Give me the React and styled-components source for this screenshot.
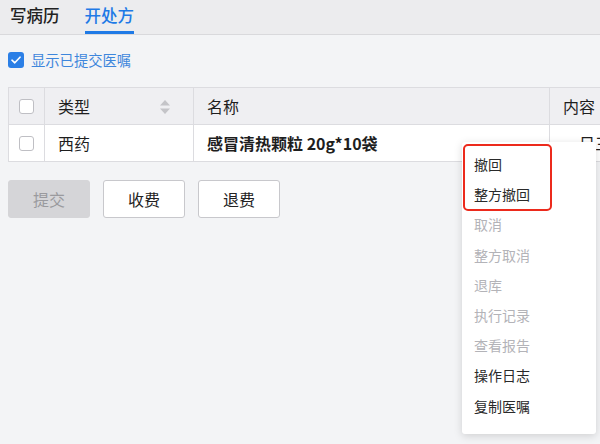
import React from "react";
import styled, { createGlobalStyle } from "styled-components";

const Global = createGlobalStyle`
  html, body { margin: 0; padding: 0; }
  body {
    width: 600px; height: 444px; overflow: hidden;
    background: #f3f4f6;
    font-family: "Noto Sans CJK SC", "Noto Sans", sans-serif;
    color: #222;
  }
`;

const Page = styled.div`
  position: relative;
  width: 600px;
  height: 444px;
  overflow: hidden;
`;

const TabBar = styled.div`
  display: flex;
  gap: 25px;
  padding-left: 10px;
  height: 34px;
  background: #ececee;
  border-bottom: 1px solid #d9d9dc;
`;

const Tab = styled.div`
  font-size: 16.5px;
  font-weight: 500;
  line-height: 31px;
  height: 31px;
  color: ${p => (p.$active ? "#1f7ae6" : "#222")};
  border-bottom: 3px solid ${p => (p.$active ? "#1f7ae6" : "transparent")};
`;

const Content = styled.div`
  padding: 16px 0 0 8px;
`;

const CheckRow = styled.label`
  display: flex;
  align-items: center;
  gap: 7px;
  height: 17px;
  font-size: 14.3px;
  color: #3d86dc;
`;

const Box = styled.span`
  display: inline-flex;
  align-items: center;
  justify-content: center;
  width: ${p => (p.$checked ? 16 : 15)}px;
  height: ${p => (p.$checked ? 16 : 15)}px;
  border-radius: 3px;
  box-sizing: border-box;
  background: ${p => (p.$checked ? "#2b7fe6" : "#fff")};
  border: ${p => (p.$checked ? "none" : "1px solid #bfbfc4")};
  flex: none;
`;

const TableWrap = styled.div`
  margin-top: 19px;
  overflow: hidden;
`;

const Table = styled.div`
  width: 680px;
  border: 1px solid #dcdce0;
  border-right: none;
  background: #fff;
`;

const Row = styled.div`
  display: grid;
  grid-template-columns: 35px 149px 356px 1fr;
  height: 36px;
  background: ${p => (p.$head ? "#efeff2" : "#fff")};
  border-bottom: ${p => (p.$head ? "1px solid #dcdce0" : "none")};
`;

const Cell = styled.div`
  display: flex;
  align-items: center;
  padding-left: ${p => (p.$center ? 0 : 13)}px;
  justify-content: ${p => (p.$center ? "center" : "flex-start")};
  border-left: ${p => (p.$first ? "none" : "1px solid #dcdce0")};
  font-size: 16px;
  font-weight: ${p => (p.$bold ? 600 : 400)};
  color: #1e1e1e;
  position: relative;
  white-space: nowrap;
  overflow: hidden;
`;

const Sort = styled.svg`
  position: absolute;
  right: 22px;
  top: 11px;
`;

const Buttons = styled.div`
  display: flex;
  gap: 13px;
  margin-top: 18px;
`;

const Button = styled.div`
  width: 82px;
  height: 38px;
  box-sizing: border-box;
  display: flex;
  align-items: center;
  justify-content: center;
  border-radius: 3px;
  font-size: 16px;
  background: ${p => (p.$disabled ? "#d5d5d8" : "#fff")};
  color: ${p => (p.$disabled ? "#9a9a9e" : "#222")};
  border: 1px solid ${p => (p.$disabled ? "#d5d5d8" : "#c8c8cc")};
`;

const Menu = styled.div`
  position: absolute;
  left: 462px;
  top: 142px;
  width: 134px;
  padding: 7px 0 13px;
  background: #fff;
  border-radius: 3px;
  box-shadow: 0 2px 8px rgba(0, 0, 0, 0.15);
`;

const Item = styled.div`
  height: 30.2px;
  line-height: 30px;
  padding-left: 12px;
  font-size: 14px;
  color: ${p => (p.$disabled ? "#b3b3b8" : "#2a2a2a")};
`;

const Highlight = styled.div`
  position: absolute;
  left: 1px;
  top: 2px;
  width: 89px;
  height: 67px;
  box-sizing: border-box;
  border: 2.5px solid #ec2a1c;
  border-radius: 5px;
`;

const Check = () => (
  <svg width="10" height="8" viewBox="0 0 10 8">
    <path d="M1 4.2 L3.8 6.8 L9 1.2" fill="none" stroke="#fff" strokeWidth="1.6" strokeLinecap="round" strokeLinejoin="round" />
  </svg>
);

const items = [
  ["撤回", false],
  ["整方撤回", false],
  ["取消", true],
  ["整方取消", true],
  ["退库", true],
  ["执行记录", true],
  ["查看报告", true],
  ["操作日志", false],
  ["复制医嘱", false],
];

export default function App() {
  return (
    <Page>
      <Global />
      <TabBar>
        <Tab>写病历</Tab>
        <Tab $active>开处方</Tab>
      </TabBar>
      <Content>
        <CheckRow>
          <Box $checked><Check /></Box>
          显示已提交医嘱
        </CheckRow>
        <TableWrap>
          <Table>
            <Row $head>
              <Cell $first $center><Box /></Cell>
              <Cell>
                类型
                <Sort width="12" height="16" viewBox="0 0 12 16">
                  <path d="M6 1 L11 6.5 L1 6.5 Z" fill="#c4c4c8" />
                  <path d="M6 15 L11 9.5 L1 9.5 Z" fill="#c4c4c8" />
                </Sort>
              </Cell>
              <Cell>名称</Cell>
              <Cell>内容</Cell>
            </Row>
            <Row>
              <Cell $first $center><Box /></Cell>
              <Cell>西药</Cell>
              <Cell $bold>感冒清热颗粒 20g*10袋</Cell>
              <Cell>一日三次</Cell>
            </Row>
          </Table>
        </TableWrap>
        <Buttons>
          <Button $disabled>提交</Button>
          <Button>收费</Button>
          <Button>退费</Button>
        </Buttons>
      </Content>
      <Menu>
        <Highlight />
        {items.map(([t, d]) => (
          <Item key={t} $disabled={d}>{t}</Item>
        ))}
      </Menu>
    </Page>
  );
}
